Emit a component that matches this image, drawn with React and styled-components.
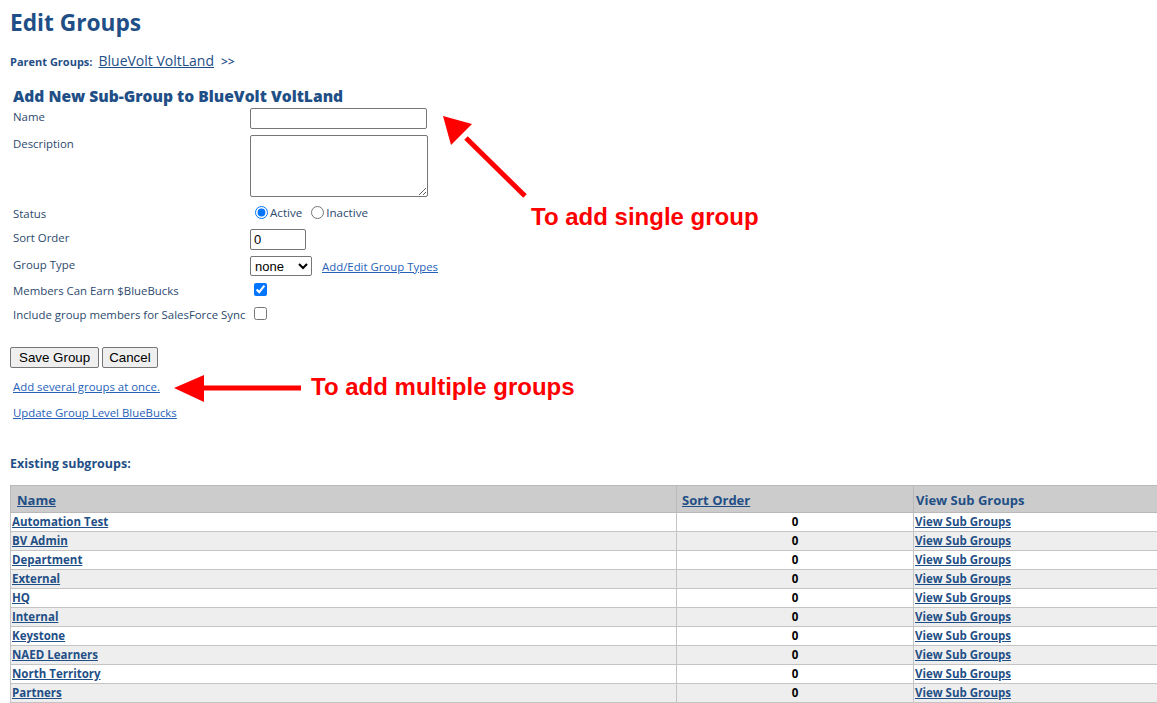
import React from 'react';
import styled, { createGlobalStyle } from 'styled-components';

const GlobalStyle = createGlobalStyle`
  html, body {
    margin: 0;
    padding: 0;
    background: #ffffff;
    overflow: hidden;
  }
  body {
    font-family: "Open Sans", "Noto Sans", sans-serif;
    color: #2c4a6e;
  }
`;

const groups = [
  'Automation Test',
  'BV Admin',
  'Department',
  'External',
  'HQ',
  'Internal',
  'Keystone',
  'NAED Learners',
  'North Territory',
  'Partners',
];

function App() {
  return (
    <>
      <GlobalStyle />
      <Page>
        <Title>Edit Groups</Title>
        <Breadcrumb>
          <strong>Parent Groups:</strong>
          <ParentLink href="#">BlueVolt VoltLand</ParentLink>
          <span>&gt;&gt;</span>
        </Breadcrumb>

        <SubTitle>Add New Sub-Group to BlueVolt VoltLand</SubTitle>
        <Form>
          <Label>Name</Label>
          <Field><TextInput type="text" /></Field>

          <Label>Description</Label>
          <Field><TextArea /></Field>

          <Label $top={2}>Status</Label>
          <Field $top={2}>
            <RadioLabel><input type="radio" name="status" defaultChecked /> Active</RadioLabel>
            <RadioLabel><input type="radio" name="status" /> Inactive</RadioLabel>
          </Field>

          <Label>Sort Order</Label>
          <Field><SortInput type="text" defaultValue="0" /></Field>

          <Label>Group Type</Label>
          <Field>
            <Select defaultValue="none">
              <option value="none">none</option>
            </Select>
            <SmallLink href="#">Add/Edit Group Types</SmallLink>
          </Field>

          <Label>Members Can Earn $BlueBucks</Label>
          <Field><Check type="checkbox" defaultChecked /></Field>

          <Label>Include group members for SalesForce Sync</Label>
          <Field><Check type="checkbox" /></Field>
        </Form>

        <Buttons>
          <Button $pad={8}>Save Group</Button>
          <Button $pad={6}>Cancel</Button>
        </Buttons>

        <ActionLinks>
          <SmallLink href="#">Add several groups at once.</SmallLink>
          <SmallLink href="#">Update Group Level BlueBucks</SmallLink>
        </ActionLinks>

        <SectionTitle>Existing subgroups:</SectionTitle>
        <Table>
          <colgroup>
            <col style={{ width: 666 }} />
            <col style={{ width: 237 }} />
            <col />
          </colgroup>
          <thead>
            <tr>
              <Th $pad={6}><HeadLink href="#">Name</HeadLink></Th>
              <Th $pad={5}><HeadLink href="#">Sort Order</HeadLink></Th>
              <Th $pad={2}>View Sub Groups</Th>
            </tr>
          </thead>
          <tbody>
            {groups.map((name, i) => (
              <Row key={name} $alt={i % 2 === 1}>
                <Td><CellLink href="#">{name}</CellLink></Td>
                <Td $center>0</Td>
                <Td><CellLink href="#">View Sub Groups</CellLink></Td>
              </Row>
            ))}
          </tbody>
        </Table>

        {/* red call-outs drawn over the form */}
        <Note $x={531} $y={203}>To add single group</Note>
        <Note $x={311} $y={373}>To add multiple groups</Note>
        <Arrows width="1157" height="703" viewBox="0 0 1157 703">
          <line x1="525" y1="196" x2="466" y2="138" stroke="#ff0000" strokeWidth="5" />
          <polygon points="443,116 472,124 451,145" fill="#ff0000" />
          <line x1="301" y1="388" x2="200" y2="388" stroke="#ff0000" strokeWidth="5" />
          <polygon points="174,388 204,375 204,402" fill="#ff0000" />
        </Arrows>
      </Page>
    </>
  );
}

const Page = styled.div`
  position: relative;
  padding: 10px 0 0 10px;
  width: 1147px;
  height: 693px;
  overflow: hidden;
`;

const Title = styled.h1`
  margin: 0;
  font-size: 22.7px;
  line-height: 26px;
  font-weight: 700;
  color: #1f4f86;
`;

const Breadcrumb = styled.div`
  display: flex;
  align-items: baseline;
  gap: 6px;
  margin-top: 15px;
  font-size: 11px;
  color: #1f4f86;
  strong {
    font-weight: 700;
  }
  span {
    font-size: 12px;
    font-weight: 600;
    margin-left: 1px;
  }
`;

const ParentLink = styled.a`
  font-size: 14px;
  color: #1f4f86;
  text-decoration: underline;
`;

const SubTitle = styled.h2`
  margin: 17px 0 0 3px;
  font-size: 15.6px;
  line-height: 19px;
  font-weight: 800;
  color: #1f4f86;
`;

const Form = styled.div`
  display: grid;
  grid-template-columns: 237px auto;
  row-gap: 6px;
  margin: 2px 0 0 3px;
  align-items: start;
`;

const Label = styled.div`
  font-size: 11.4px;
  line-height: 18px;
  color: #2c4a6e;
  white-space: nowrap;
  margin-top: ${p => p.$top || 0}px;
`;

const Field = styled.div`
  display: flex;
  align-items: center;
  gap: 10px;
  margin-top: ${p => p.$top || 0}px;
`;

const TextInput = styled.input`
  box-sizing: border-box;
  width: 177px;
  height: 21px;
  border: 1px solid #767676;
  border-radius: 2px;
  padding: 1px 3px;
  font: 13px "Liberation Sans", Arial, sans-serif;
`;

const TextArea = styled.textarea`
  box-sizing: border-box;
  width: 178px;
  height: 62px;
  border: 1px solid #767676;
  border-radius: 2px;
  font: 13px "Liberation Mono", monospace;
`;

const RadioLabel = styled.label`
  display: inline-flex;
  align-items: center;
  gap: 1px;
  font-size: 11.6px;
  color: #2c4a6e;
  margin-right: -6px;
  input {
    margin: 0 1px 0 5px;
    width: 13px;
    height: 13px;
  }
`;

const SortInput = styled(TextInput)`
  width: 56px;
`;

const Select = styled.select`
  box-sizing: border-box;
  height: 20px;
  width: 62px;
  border: 1px solid #767676;
  border-radius: 2px;
  font: 13px "Liberation Sans", Arial, sans-serif;
  color: #000;
  background: #fff;
`;

const Check = styled.input`
  width: 13px;
  height: 13px;
  margin: 1px 0 3px 4px;
  accent-color: #0075ff;
`;

const SmallLink = styled.a`
  font-size: 11.4px;
  color: #2661b8;
  text-decoration: underline;
`;

const Buttons = styled.div`
  display: flex;
  gap: 3px;
  margin-top: 23px;
`;

const Button = styled.button`
  height: 21px;
  padding: 1px ${p => p.$pad}px;
  font: 13.33px "Liberation Sans", Arial, sans-serif;
  color: #000;
  background: #efefef;
  border: 1px solid #767676;
  border-radius: 2px;
`;

const ActionLinks = styled.div`
  display: flex;
  flex-direction: column;
  align-items: flex-start;
  gap: 9px;
  margin: 10px 0 0 3px;
  line-height: 17px;
`;

const SectionTitle = styled.div`
  margin-top: 34px;
  font-size: 12.5px;
  font-weight: 700;
  color: #1f4f86;
`;

const Table = styled.table`
  margin-top: 13px;
  width: 1180px;
  border-collapse: collapse;
  table-layout: fixed;
  font-size: 11.5px;
`;

const Th = styled.th`
  height: 25px;
  padding: 1px 0 0 ${p => p.$pad}px;
  background: #cccccc;
  border: 1px solid #b9b9b9;
  text-align: left;
  font-size: 13px;
  font-weight: 700;
  color: #1f4f86;
  vertical-align: middle;
`;

const HeadLink = styled.a`
  color: #1f4f86;
  text-decoration: underline;
`;

const Row = styled.tr`
  background: ${p => (p.$alt ? '#eeeeee' : '#ffffff')};
`;

const Td = styled.td`
  height: 18px;
  padding: 0 1px;
  border: 1px solid #c4c4c4;
  text-align: ${p => (p.$center ? 'center' : 'left')};
  font-weight: 700;
  color: #000;
  line-height: 16px;
  white-space: nowrap;
`;

const CellLink = styled.a`
  color: #1f4f86;
  text-decoration: underline;
  font-weight: 700;
`;

const Note = styled.div`
  position: absolute;
  left: ${p => p.$x}px;
  top: ${p => p.$y}px;
  font: 700 24px "Liberation Sans", Arial, sans-serif;
  color: #ff0000;
  white-space: nowrap;
`;

const Arrows = styled.svg`
  position: absolute;
  left: 0;
  top: 0;
  pointer-events: none;
`;

export default App;
